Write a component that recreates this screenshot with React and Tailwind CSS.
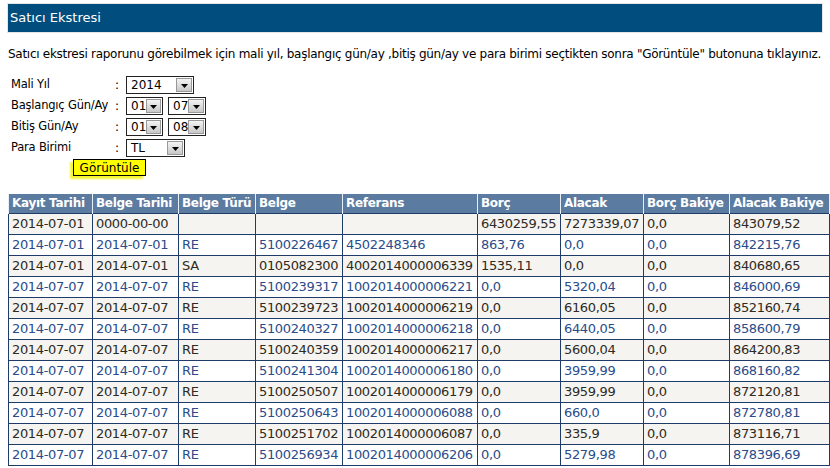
const rows = [
  ["2014-07-01", "0000-00-00", "", "", "", "6430259,55", "7273339,07", "0,0", "843079,52"],
  ["2014-07-01", "2014-07-01", "RE", "5100226467", "4502248346", "863,76", "0,0", "0,0", "842215,76"],
  ["2014-07-01", "2014-07-01", "SA", "0105082300", "4002014000006339", "1535,11", "0,0", "0,0", "840680,65"],
  ["2014-07-07", "2014-07-07", "RE", "5100239317", "1002014000006221", "0,0", "5320,04", "0,0", "846000,69"],
  ["2014-07-07", "2014-07-07", "RE", "5100239723", "1002014000006219", "0,0", "6160,05", "0,0", "852160,74"],
  ["2014-07-07", "2014-07-07", "RE", "5100240327", "1002014000006218", "0,0", "6440,05", "0,0", "858600,79"],
  ["2014-07-07", "2014-07-07", "RE", "5100240359", "1002014000006217", "0,0", "5600,04", "0,0", "864200,83"],
  ["2014-07-07", "2014-07-07", "RE", "5100241304", "1002014000006180", "0,0", "3959,99", "0,0", "868160,82"],
  ["2014-07-07", "2014-07-07", "RE", "5100250507", "1002014000006179", "0,0", "3959,99", "0,0", "872120,81"],
  ["2014-07-07", "2014-07-07", "RE", "5100250643", "1002014000006088", "0,0", "660,0", "0,0", "872780,81"],
  ["2014-07-07", "2014-07-07", "RE", "5100251702", "1002014000006087", "0,0", "335,9", "0,0", "873116,71"],
  ["2014-07-07", "2014-07-07", "RE", "5100256934", "1002014000006206", "0,0", "5279,98", "0,0", "878396,69"],
];

const headers = [
  ["Kayıt Tarihi", "w-[84px]"],
  ["Belge Tarihi", "w-[86px]"],
  ["Belge Türü", "w-[77px]"],
  ["Belge", "w-[87px]"],
  ["Referans", "w-[135px]"],
  ["Borç", "w-[83px]"],
  ["Alacak", "w-[83px]"],
  ["Borç Bakiye", "w-[86px]"],
  ["Alacak Bakiye", "w-[100px]"],
];

const Select = ({ value, width }) => (
  <div className={`flex h-[18px] items-center border border-[#222] bg-white ${width}`}>
    <span className="flex-1 pl-[4px] text-[12px] leading-none text-black">{value}</span>
    <span className="mr-[1px] flex h-[14px] w-[16px] items-end justify-center border border-[#999] bg-gradient-to-b from-[#f4f4f4] to-[#c8c8c8] pb-[3px]">
      <svg width="7" height="4" viewBox="0 0 7 4">
        <path d="M0 0h7L3.5 4z" fill="#000" />
      </svg>
    </span>
  </div>
);

const FormRow = ({ label, children }) => (
  <div className="flex h-[21px] items-center">
    <span className="w-[107px] pl-[3px] text-[11.5px] tracking-[-0.2px] whitespace-nowrap text-black">
      {label}
    </span>
    <span className="w-[11px] text-[12px] text-black">:</span>
    <div className="flex gap-[5px]">{children}</div>
  </div>
);

const App = () => {
  return (
    <div className="h-[468px] w-[830px] overflow-hidden bg-white font-['DejaVu_Sans',Verdana,sans-serif]">
      <div className="px-[7px] pt-[3px]">
        <div className="border border-[#e6e6e6]">
          <div className="flex h-[28px] items-center bg-[#014e7e] pl-[2px] text-[13px] text-white">
            Satıcı Ekstresi
          </div>
        </div>
      </div>

      <p className="mt-[13px] pl-[8px] text-[12px] leading-[16px] tracking-[-0.28px] whitespace-nowrap text-black">
        Satıcı ekstresi raporunu görebilmek için mali yıl, başlangıç gün/ay ,bitiş gün/ay ve para birimi seçtikten sonra "Görüntüle" butonuna tıklayınız.
      </p>

      <div className="mt-[12px] pl-[8px]">
        <FormRow label="Mali Yıl">
          <Select value="2014" width="w-[68px]" />
        </FormRow>
        <FormRow label="Başlangıç Gün/Ay">
          <Select value="01" width="w-[37px]" />
          <Select value="07" width="w-[38px]" />
        </FormRow>
        <FormRow label="Bitiş Gün/Ay">
          <Select value="01" width="w-[37px]" />
          <Select value="08" width="w-[38px]" />
        </FormRow>
        <FormRow label="Para Birimi">
          <Select value="TL" width="w-[59px]" />
        </FormRow>
        <div className="mt-[1px] flex pl-[65px]">
          <button className="h-[17px] w-[73px] border border-black bg-[#ffff00] text-[12px] leading-none text-black shadow-[-3px_3px_2px_#f5f530]">
            Görüntüle
          </button>
        </div>
      </div>

      <div className="mt-[18px] pl-[8px]">
        <table className="w-[821px] table-fixed border-collapse text-[13px] tracking-[-0.35px]">
          <thead>
            <tr className="h-[19px] bg-[#5b7ba0]">
              {headers.map(([h, w]) => (
                <th
                  key={h}
                  className={`${w} border-x border-[#e8eef5] pr-0 pl-[3px] text-left text-[12px] font-bold leading-none tracking-[-0.3px] whitespace-nowrap text-white`}
                >
                  {h}
                </th>
              ))}
            </tr>
          </thead>
          <tbody>
            {rows.map((r, i) => (
              <tr
                key={i}
                className={
                  i % 2 === 0
                    ? "h-[21px] bg-[#f5f4f0] text-[#2e2a24]"
                    : "h-[21px] bg-white text-[#2a4c8a]"
                }
              >
                {r.map((c, j) => (
                  <td
                    key={j}
                    className="border border-[#1f3b68] pr-0 pl-[3px] leading-none whitespace-nowrap"
                  >
                    {c}
                  </td>
                ))}
              </tr>
            ))}
          </tbody>
        </table>
      </div>
    </div>
  );
};

export default App;
